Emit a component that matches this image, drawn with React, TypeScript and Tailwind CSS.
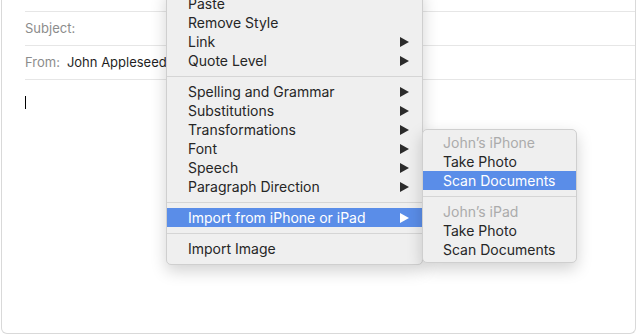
type Row = { label: string; sub?: boolean; active?: boolean; muted?: boolean } | "sep";

const mainMenu: Row[] = [
  { label: "Paste" },
  { label: "Remove Style" },
  { label: "Link", sub: true },
  { label: "Quote Level", sub: true },
  "sep",
  { label: "Spelling and Grammar", sub: true },
  { label: "Substitutions", sub: true },
  { label: "Transformations", sub: true },
  { label: "Font", sub: true },
  { label: "Speech", sub: true },
  { label: "Paragraph Direction", sub: true },
  "sep",
  { label: "Import from iPhone or iPad", sub: true, active: true },
  "sep",
  { label: "Import Image" },
];

const deviceMenu: Row[] = [
  { label: "John’s iPhone", muted: true },
  { label: "Take Photo" },
  { label: "Scan Documents", active: true },
  "sep",
  { label: "John’s iPad", muted: true },
  { label: "Take Photo" },
  { label: "Scan Documents" },
];

function Arrow({ white }: { white?: boolean }) {
  return (
    <svg width="9" height="10" viewBox="0 0 9 10">
      <polygon points="0,0 9,5 0,10" fill={white ? "#ffffff" : "#2b2b2b"} />
    </svg>
  );
}

function MenuRows({ rows, indent }: { rows: Row[]; indent: string }) {
  return (
    <>
      {rows.map((r, i) =>
        r === "sep" ? (
          <div key={i} className="flex h-[12px] items-center">
            <div className="h-px w-full bg-[#d5d5d5]" />
          </div>
        ) : (
          <div
            key={i}
            className={
              "flex h-[19px] items-center justify-between pr-[13px] " +
              indent +
              (r.active ? " bg-[#5a8de8] text-white" : r.muted ? " text-[#ababab]" : " text-[#262626]")
            }
          >
            <span>{r.label}</span>
            {r.sub && <Arrow white={r.active} />}
          </div>
        )
      )}
    </>
  );
}

export default function App() {
  return (
    <div className="relative h-[334px] w-[640px] overflow-hidden bg-white font-['Inter',sans-serif]">
      {/* compose window */}
      <div className="ml-px flex h-[334px] w-[635px] flex-col rounded-b-[6px] border-x border-b border-[#d9d9d9] bg-white">
        <div className="ml-[23px] h-[12px] border-b border-[#e6e6e6]" />
        <div className="ml-[23px] flex h-[34px] items-center border-b border-[#e6e6e6] text-[13px] text-[#8c8c8c]">
          Subject:
        </div>
        <div className="ml-[23px] flex h-[34px] items-center gap-[7px] border-b border-[#e6e6e6] text-[13px]">
          <span className="text-[#8c8c8c]">From:</span>
          <span className="text-[#1f1f1f]">John Appleseed</span>
        </div>
        <div className="ml-[23px] pt-[16px]">
          <div className="h-[13px] w-px bg-black" />
        </div>
      </div>

      {/* context menu */}
      <div className="absolute left-[166px] top-[-11px] w-[257px] rounded-[5px] border border-[#cfcfcf] bg-[#efefef] pb-[6px] pt-[4px] text-[14px] shadow-[0_6px_16px_rgba(0,0,0,0.18)]">
        <MenuRows rows={mainMenu} indent="pl-[21px]" />
      </div>

      {/* submenu */}
      <div className="absolute left-[422px] top-[129px] w-[155px] rounded-[5px] border border-[#cfcfcf] bg-[#efefef] py-[3px] text-[14px] shadow-[0_6px_16px_rgba(0,0,0,0.18)]">
        <MenuRows rows={deviceMenu} indent="pl-[20px]" />
      </div>
    </div>
  );
}
